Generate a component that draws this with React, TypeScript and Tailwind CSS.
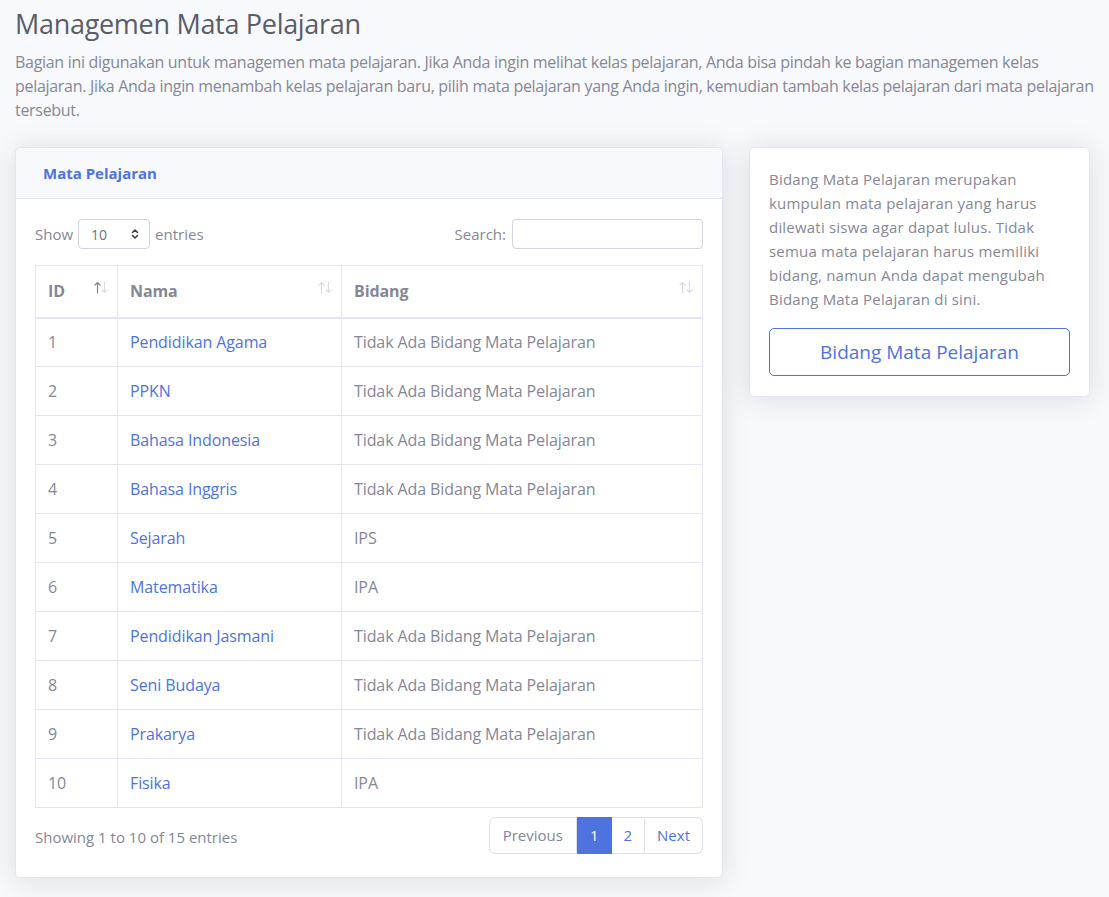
import { ChevronsUpDown } from "lucide-react";

const rows = [
  { id: 1, nama: "Pendidikan Agama", bidang: "Tidak Ada Bidang Mata Pelajaran" },
  { id: 2, nama: "PPKN", bidang: "Tidak Ada Bidang Mata Pelajaran" },
  { id: 3, nama: "Bahasa Indonesia", bidang: "Tidak Ada Bidang Mata Pelajaran" },
  { id: 4, nama: "Bahasa Inggris", bidang: "Tidak Ada Bidang Mata Pelajaran" },
  { id: 5, nama: "Sejarah", bidang: "IPS" },
  { id: 6, nama: "Matematika", bidang: "IPA" },
  { id: 7, nama: "Pendidikan Jasmani", bidang: "Tidak Ada Bidang Mata Pelajaran" },
  { id: 8, nama: "Seni Budaya", bidang: "Tidak Ada Bidang Mata Pelajaran" },
  { id: 9, nama: "Prakarya", bidang: "Tidak Ada Bidang Mata Pelajaran" },
  { id: 10, nama: "Fisika", bidang: "IPA" },
];

function SortIcon({ active }: { active?: boolean }) {
  return (
    <svg className="absolute right-[9px] top-[15px]" width="14" height="13" viewBox="0 0 14 13" fill="none" strokeWidth="1.2" strokeLinecap="round">
      <g stroke="#858796" opacity={active ? 1 : 0.3}>
        <path d="M3.5 12V1.5M1 4l2.5-2.5L6 4" />
      </g>
      <g stroke="#858796" opacity="0.3">
        <path d="M10.5 1v10.5M8 9l2.5 2.5L13 9" />
      </g>
    </svg>
  );
}

export default function App() {
  return (
    <div className="min-h-[897px] bg-[#f8f9fc] px-[15px] pt-[7px] text-[#858796] font-['Open_Sans','Noto_Sans',sans-serif]">
      <h1 className="text-[27px] leading-[34px] tracking-[-0.3px] text-[#5a5c69] mb-[9px]">Managemen Mata Pelajaran</h1>
      <p className="text-[16px] leading-[24px] tracking-[-0.3px] mb-[25px]">
        Bagian ini digunakan untuk managemen mata pelajaran. Jika Anda ingin melihat kelas pelajaran, Anda bisa pindah ke bagian managemen kelas pelajaran. Jika Anda ingin menambah kelas pelajaran baru, pilih mata pelajaran yang Anda ingin, kemudian tambah kelas pelajaran dari mata pelajaran tersebut.
      </p>

      <div className="flex items-start gap-[26px]">
        {/* table card */}
        <div className="w-[708px] shrink-0 rounded-[5px] border border-[#e3e6f0] bg-white shadow-[0_2px_28px_0_rgba(58,59,69,0.15)]">
          <div className="h-[51px] flex items-center px-[27px] bg-[#f8f9fc] border-b border-[#e3e6f0] rounded-t-[5px]">
            <h6 className="text-[15px] font-bold text-[#4e73df]">Mata Pelajaran</h6>
          </div>
          <div className="px-[19px] pt-[20px] pb-[23px]">
            <div className="flex items-center justify-between h-[30px]">
              <div className="flex items-center gap-[5px] text-[15px]">
                <span>Show</span>
                <div className="w-[72px] h-[30px] border border-[#d1d3e2] rounded-[4px] flex items-center justify-between pl-[12px] pr-[8px] text-[14px] text-[#6e707e]">
                  <span>10</span>
                  <ChevronsUpDown className="w-[12px] h-[12px] text-[#3a3b45]" strokeWidth={3} />
                </div>
                <span>entries</span>
              </div>
              <div className="flex items-center gap-[6px] text-[15px]">
                <span>Search:</span>
                <div className="w-[191px] h-[30px] border border-[#d1d3e2] rounded-[4px]" />
              </div>
            </div>

            <table className="w-[668px] mt-[16px] border-collapse text-[16px] tracking-[-0.1px]">
              <thead>
                <tr className="h-[52px]">
                  <th className="relative w-[82px] border border-[#e3e6f0] border-b-2 px-[12px] text-left font-bold">
                    ID
                    <SortIcon active />
                  </th>
                  <th className="relative w-[224px] border border-[#e3e6f0] border-b-2 px-[12px] text-left font-bold">
                    Nama
                    <SortIcon />
                  </th>
                  <th className="relative border border-[#e3e6f0] border-b-2 px-[12px] text-left font-bold">
                    Bidang
                    <SortIcon />
                  </th>
                </tr>
              </thead>
              <tbody>
                {rows.map((r) => (
                  <tr key={r.id} className="h-[49px]">
                    <td className="border border-[#e3e6f0] px-[12px]">{r.id}</td>
                    <td className="border border-[#e3e6f0] px-[12px] text-[#4e73df]">{r.nama}</td>
                    <td className="border border-[#e3e6f0] px-[12px]">{r.bidang}</td>
                  </tr>
                ))}
              </tbody>
            </table>

            <div className="flex items-center justify-between mt-[9px]">
              <span className="text-[15px] pt-[4px]">Showing 1 to 10 of 15 entries</span>
              <div className="flex h-[37px] text-[15px]">
                <span className="flex items-center px-[13px] border border-[#dddfeb] rounded-l-[6px]">Previous</span>
                <span className="flex items-center px-[13px] bg-[#4e73df] text-white">1</span>
                <span className="flex items-center px-[12px] border-y border-r border-[#dddfeb] text-[#4e73df]">2</span>
                <span className="flex items-center px-[12px] border-y border-r border-[#dddfeb] rounded-r-[6px] text-[#4e73df]">Next</span>
              </div>
            </div>
          </div>
        </div>

        {/* info card */}
        <div className="w-[341px] shrink-0 rounded-[5px] border border-[#e3e6f0] bg-white px-[19px] pt-[19px] pb-[20px] shadow-[0_2px_28px_0_rgba(58,59,69,0.15)]">
          <p className="text-[15px] leading-[24px] tracking-[0.2px]">
            Bidang Mata Pelajaran merupakan kumpulan mata pelajaran yang harus dilewati siswa agar dapat lulus. Tidak semua mata pelajaran harus memiliki bidang, namun Anda dapat mengubah Bidang Mata Pelajaran di sini.
          </p>
          <div className="mt-[17px] h-[48px] border border-[#4e73df] rounded-[5px] flex items-center justify-center text-[19px] text-[#4e73df]">
            Bidang Mata Pelajaran
          </div>
        </div>
      </div>
    </div>
  );
}
